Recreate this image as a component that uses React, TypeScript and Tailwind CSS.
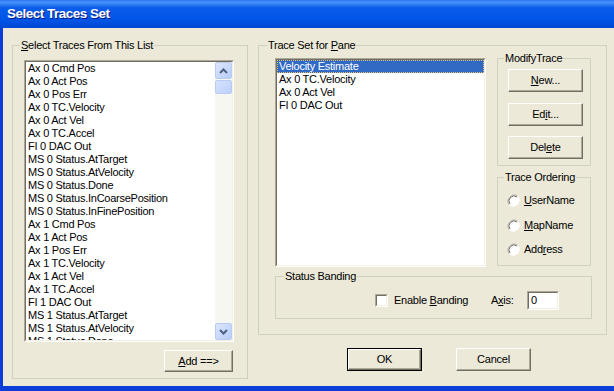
import React from 'react';

const sourceTraces = [
  'Ax 0 Cmd Pos',
  'Ax 0 Act Pos',
  'Ax 0 Pos Err',
  'Ax 0 TC.Velocity',
  'Ax 0 Act Vel',
  'Ax 0 TC.Accel',
  'FI 0 DAC Out',
  'MS 0 Status.AtTarget',
  'MS 0 Status.AtVelocity',
  'MS 0 Status.Done',
  'MS 0 Status.InCoarsePosition',
  'MS 0 Status.InFinePosition',
  'Ax 1 Cmd Pos',
  'Ax 1 Act Pos',
  'Ax 1 Pos Err',
  'Ax 1 TC.Velocity',
  'Ax 1 Act Vel',
  'Ax 1 TC.Accel',
  'FI 1 DAC Out',
  'MS 1 Status.AtTarget',
  'MS 1 Status.AtVelocity',
  'MS 1 Status.Done',
];

const paneTraces = ['Velocity Estimate', 'Ax 0 TC.Velocity', 'Ax 0 Act Vel', 'FI 0 DAC Out'];

// classic sunken 3d edge: two nested 1px borders
const Sunken = ({ className, children }: { className?: string; children?: React.ReactNode }) => (
  <div className={`border border-t-[#ACA899] border-l-[#ACA899] border-r-white border-b-white ${className ?? ''}`}>
    <div className="h-full w-full border border-t-[#716F64] border-l-[#716F64] border-r-[#F1EFE2] border-b-[#F1EFE2] bg-white overflow-hidden">
      {children}
    </div>
  </div>
);

const Button = ({ children, className }: { children: React.ReactNode; className?: string }) => (
  <button
    className={`flex items-center justify-center bg-[#ECE9D8] border border-t-white border-l-white border-r-[#716F64] border-b-[#716F64] shadow-[inset_-1px_-1px_0_#ACA899] text-[11px] tracking-[-0.2px] text-black ${className ?? ''}`}
  >
    {children}
  </button>
);

const ScrollArrow = ({ down }: { down?: boolean }) => (
  <div className="h-[17px] w-[17px] rounded-[2px] border border-[#B9CBF3] bg-[linear-gradient(135deg,#DCE6FD,#B8CDF9)] flex items-center justify-center">
    <svg width="9" height="6" viewBox="0 0 9 6">
      <polyline
        points={down ? '1,1 4.5,4.5 8,1' : '1,5 4.5,1.5 8,5'}
        fill="none"
        stroke="#4D6185"
        strokeWidth="2"
      />
    </svg>
  </div>
);

const Radio = ({ label, mn }: { label: [string, string, string]; mn?: boolean }) => (
  <div className="flex items-center h-[13px]">
    <svg width="13" height="13" viewBox="0 0 13 13">
      <circle cx="6.5" cy="6.5" r="6" fill="white" />
      <path d="M2.3 10.7 A6 6 0 0 1 10.7 2.3" fill="none" stroke="#ACA899" strokeWidth="1" />
      <path d="M3 10 A5 5 0 0 1 10 3" fill="none" stroke="#716F64" strokeWidth="1" />
      <path d="M10.7 2.3 A6 6 0 0 1 2.3 10.7" fill="none" stroke="#FFFFFF" strokeWidth="1" />
    </svg>
    <span className="ml-[4px]">
      {label[0]}
      <u>{label[1]}</u>
      {label[2]}
    </span>
  </div>
);

const GroupBox = ({
  title,
  className,
  children,
}: {
  title: React.ReactNode;
  className?: string;
  children?: React.ReactNode;
}) => (
  <fieldset className={`border border-[#D0D0BF] ${className ?? ''}`}>
    <legend className="px-[1px] leading-[13px]">{title}</legend>
    {children}
  </fieldset>
);

export default function App() {
  return (
    <div className="w-[614px] h-[391px] flex flex-col bg-[#0B3ED9] overflow-hidden font-['Liberation_Sans',Arial,sans-serif] text-[11px] tracking-[-0.25px] text-black">
      <div className="h-[28px] flex items-center pl-[7px] bg-[linear-gradient(to_bottom,#2A74F2_0%,#4A93FA_8%,#0A5CEB_28%,#0055E6_70%,#0047D4_100%)]">
        <span className="text-white font-bold text-[13.5px] tracking-[-0.5px] [text-shadow:1px_1px_#0A1883]">
          Select Traces Set
        </span>
      </div>

      <div className="flex-1 flex pl-[3px] pb-[5px]">
        <div className="flex-1 flex items-start bg-[#ECE9D8] pl-[9px] pt-[11px]">
          {/* left group */}
          <GroupBox
            className="w-[236px] h-[340px] pl-[7px]"
            title={
              <>
                <u>S</u>elect Traces From This List
              </>
            }
          >
            <div className="flex flex-col items-end w-[214px]">
              <Sunken className="w-[210px] h-[282px] mt-[8px]">
                <div className="flex h-full">
                  <div className="flex-1 pl-[2px] overflow-hidden">
                    {sourceTraces.map((t) => (
                      <div key={t} className="h-[13px] leading-[13px] whitespace-nowrap">
                        {t}
                      </div>
                    ))}
                  </div>
                  <div className="w-[17px] flex flex-col bg-[#F7F7F2]">
                    <ScrollArrow />
                    <div className="mt-[1px] h-[14px] w-[17px] rounded-[2px] border border-[#B9CBF3] bg-[linear-gradient(135deg,#D6E2FD,#BCD0FA)]" />
                    <div className="flex-1" />
                    <ScrollArrow down />
                  </div>
                </div>
              </Sunken>
              <Button className="w-[69px] h-[22px] mt-[8px] mr-[1px]">
                <u>A</u>dd ==&gt;
              </Button>
            </div>
          </GroupBox>

          {/* right column */}
          <div className="ml-[10px] flex flex-col">
            <GroupBox
              className="w-[349px] h-[296px] pl-[8px]"
              title={
                <>
                  Trace Set for <u>P</u>ane
                </>
              }
            >
              <div className="ml-[8px] flex flex-col">
                <div className="flex">
                  <Sunken className="w-[211px] h-[209px] mt-[6px]">
                    <div className="flex flex-col">
                      {paneTraces.map((t, i) => (
                        <div
                          key={t}
                          className={`h-[13px] leading-[13px] pl-[2px] whitespace-nowrap ${
                            i === 0
                              ? 'bg-[#316AC5] text-white outline-1 outline-dotted outline-[#E8C070] -outline-offset-1'
                              : ''
                          }`}
                        >
                          {t}
                        </div>
                      ))}
                    </div>
                  </Sunken>

                  <div className="ml-[11px] flex flex-col">
                    <GroupBox className="w-[94px] h-[114px] pl-[6px]" title="ModifyTrace">
                      <div className="pl-[4px] flex flex-col">
                        <Button className="w-[75px] h-[23px] mt-[4px]">
                          <u>N</u>ew...
                        </Button>
                        <Button className="w-[75px] h-[23px] mt-[11px]">
                          Ed<u>i</u>t...
                        </Button>
                        <Button className="w-[75px] h-[23px] mt-[10px]">
                          Del<u>e</u>te
                        </Button>
                      </div>
                    </GroupBox>
                    <GroupBox className="w-[94px] h-[95px] mt-[5px] pl-[6px]" title="Trace Ordering">
                      <div className="pl-[3px] mt-[10px] flex flex-col gap-[11.5px]">
                        <Radio label={['', 'U', 'serName']} />
                        <Radio label={['', 'M', 'apName']} />
                        <Radio label={['Add', 'r', 'ess']} />
                      </div>
                    </GroupBox>
                  </div>
                </div>

                <GroupBox className="w-[317px] h-[49px] mt-[3px] pl-[8px]" title="Status Banding">
                  <div className="flex items-center h-[19px] mt-[8px] ml-[91px]">
                    <div className="w-[116px] flex items-center">
                      <Sunken className="w-[13px] h-[13px]" />
                      <span className="ml-[6px]">
                        Enable <u>B</u>anding
                      </span>
                    </div>
                    <span className="w-[36px]">
                      A<u>x</u>is:
                    </span>
                    <Sunken className="w-[32px] h-[19px]">
                      <div className="pl-[2px] leading-[15px]">0</div>
                    </Sunken>
                  </div>
                </GroupBox>
              </div>
            </GroupBox>

            <div className="flex mt-[13px] pl-[89px] gap-[34px]">
              <div className="border border-black">
                <Button className="w-[73px] h-[21px]">OK</Button>
              </div>
              <Button className="w-[75px] h-[23px]">Cancel</Button>
            </div>
          </div>
        </div>
      </div>
    </div>
  );
}
